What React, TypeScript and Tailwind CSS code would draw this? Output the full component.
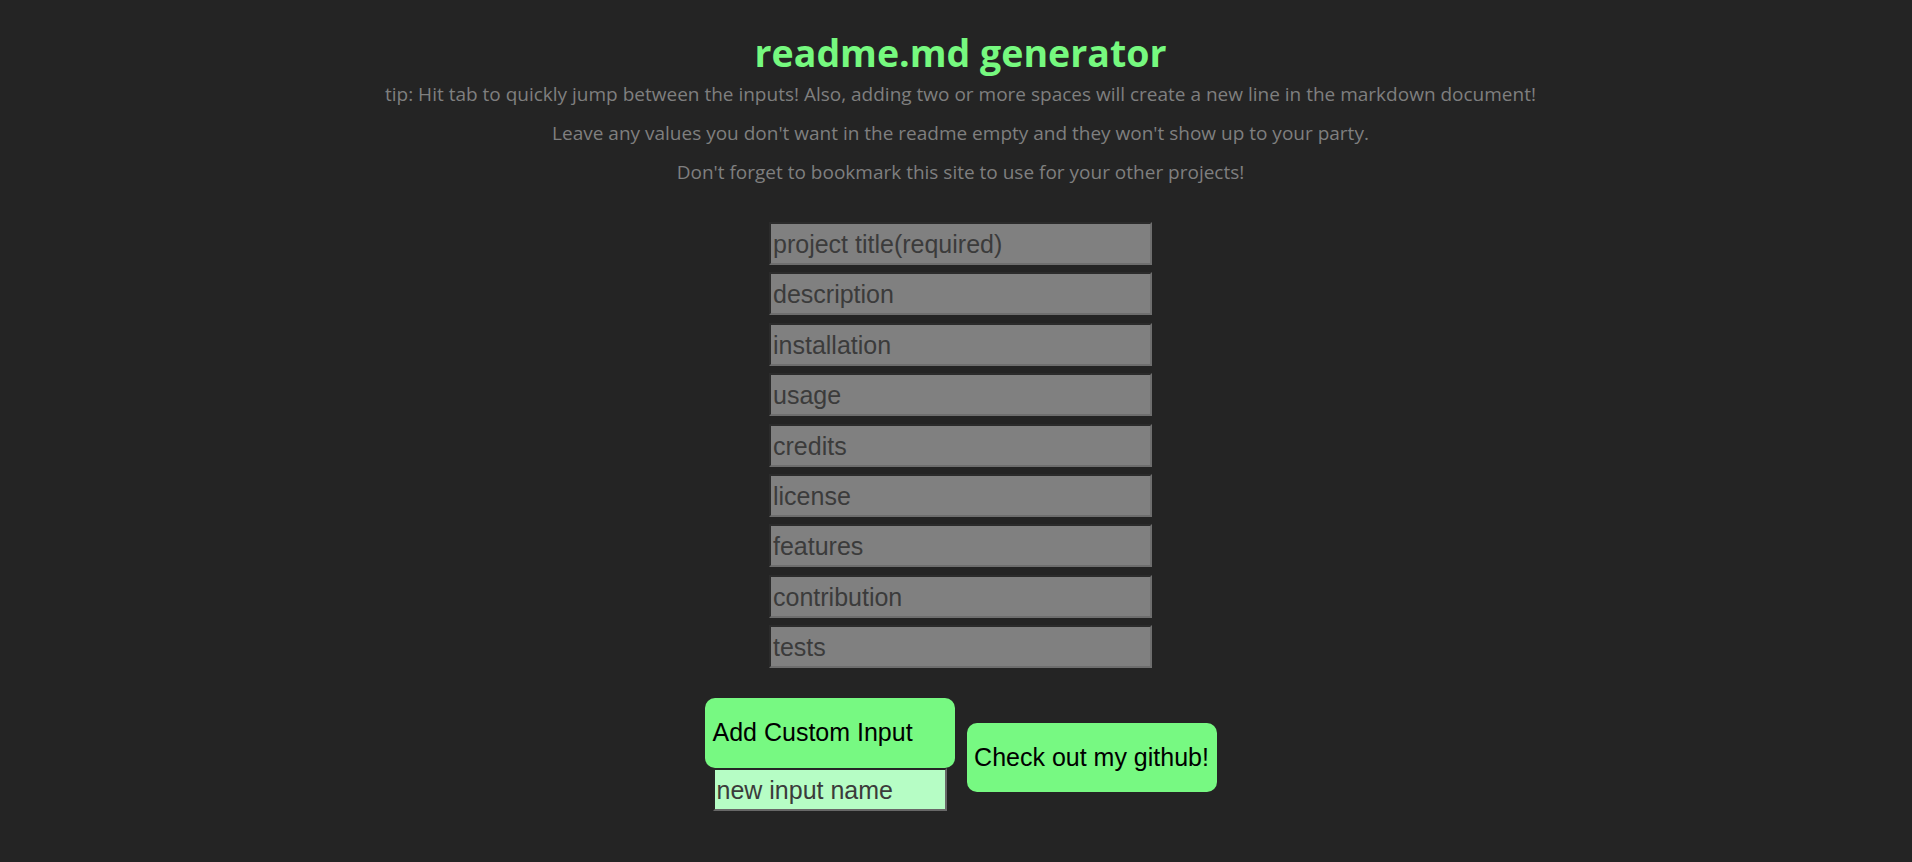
import { useState } from "react";

const fields = [
  "project title(required)",
  "description",
  "installation",
  "usage",
  "credits",
  "license",
  "features",
  "contribution",
  "tests",
];

export default function App() {
  const [values, setValues] = useState<Record<string, string>>({});
  const [custom, setCustom] = useState("");

  return (
    <div className="min-h-screen w-full bg-[#242424] pl-[9px] font-['Liberation_Sans',Arial,sans-serif]">
      {/* Header */}
      <div className="pt-[31px] text-center font-['Open_Sans','Noto_Sans',sans-serif]">
        <h1 className="text-[37.5px] leading-[44px] font-bold text-[#76f97f]">
          readme.md generator
        </h1>
        <p className="text-[19px] leading-[39px] text-[#7f7f7f]">
          tip: Hit tab to quickly jump between the inputs! Also, adding two or more spaces will create a new line in the markdown document!
        </p>
        <p className="text-[19px] leading-[39px] text-[#7f7f7f]">
          Leave any values you don't want in the readme empty and they won't show up to your party.
        </p>
        <p className="text-[19px] leading-[39px] text-[#7f7f7f]">
          Don't forget to bookmark this site to use for your other projects!
        </p>
      </div>

      {/* Inputs */}
      <div className="mt-[30px] flex flex-col items-center gap-[7.4px]">
        {fields.map((field) => (
          <input
            key={field}
            type="text"
            placeholder={field}
            value={values[field] ?? ""}
            onChange={(e) => setValues({ ...values, [field]: e.target.value })}
            className="h-[43px] w-[383px] border-2 border-t-[#2b2b2b] border-l-[#2b2b2b] border-b-[#6e6e6e] border-r-[#6e6e6e] bg-[#808080] pt-[2px] pl-[2px] text-[25px] text-[#3b3b3b] outline-none placeholder:text-[#3b3b3b]"
          />
        ))}
      </div>

      {/* Buttons */}
      <div className="mt-[30px] flex justify-center">
        <div className="flex items-start gap-[12px]">
          <div className="flex flex-col items-center">
            <button className="h-[70px] w-[250px] rounded-[10px] bg-[#77f982] pl-[8px] text-left text-[25px] text-black">
              Add Custom Input
            </button>
            <input
              type="text"
              placeholder="new input name"
              value={custom}
              onChange={(e) => setCustom(e.target.value)}
              className="h-[43px] w-[234px] border-2 border-t-[#262626] border-l-[#262626] border-b-[#686868] border-r-[#686868] bg-[#b6fdc5] pt-[2px] pl-[2px] text-[25px] text-[#3b3b3b] outline-none placeholder:text-[#3b3b3b]"
            />
          </div>
          <button className="mt-[25px] h-[69px] w-[250px] rounded-[10px] bg-[#77f982] text-[25px] text-black">
            Check out my github!
          </button>
        </div>
      </div>
    </div>
  );
}
